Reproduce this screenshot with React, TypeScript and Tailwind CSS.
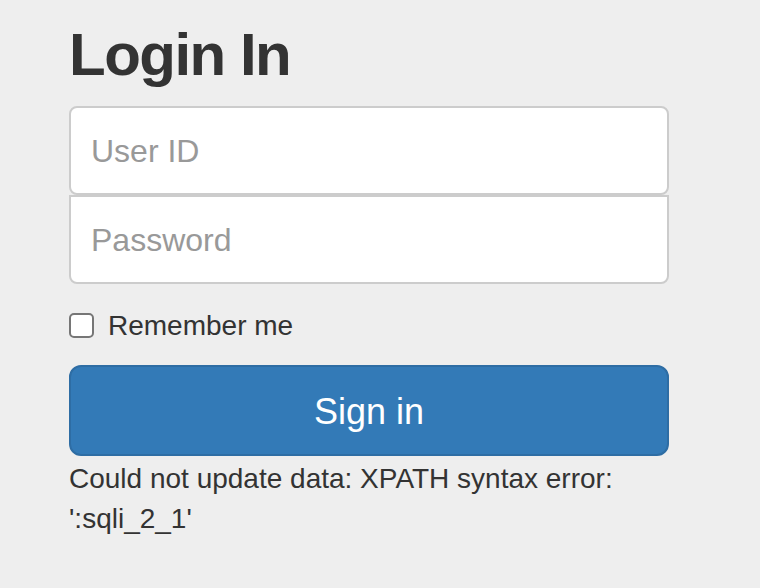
import React from "react";

export default function App() {
  const font = { fontFamily: '"Liberation Sans", Arial, Helvetica, sans-serif' };
  return (
    <div className="min-h-[588px] w-[760px] bg-[#eeeeee] text-[#333333]" style={font}>
      <div className="pl-[69px] pt-[22px] w-[669px]">
        <h2 className="text-[60px] leading-[66px] font-bold mb-[18px] tracking-[-1.5px]">Login In</h2>
        <input
          type="text"
          placeholder="User ID"
          className="block w-full h-[89px] bg-white border-2 border-[#cccccc] rounded-[8px] px-[20px] pt-[2px] text-[32px] outline-none placeholder:text-[#999999]"
        />
        <input
          type="password"
          placeholder="Password"
          className="block w-full h-[89px] bg-white border-2 border-[#cccccc] rounded-[8px] rounded-t-none px-[20px] pt-[2px] text-[32px] outline-none placeholder:text-[#999999]"
        />
        <label className="flex items-start mt-[22px] h-[40px] text-[28px] leading-[40px]">
          <span className="mt-[7px] w-[25px] h-[25px] shrink-0 bg-white border-2 border-[#767676] rounded-[5px]" />
          <span className="ml-[14px]">Remember me</span>
        </label>
        <button className="mt-[19px] w-full h-[91px] bg-[#337ab7] border-2 border-[#2e6da4] rounded-[12px] pt-[2px] text-white text-[36px] leading-[48px]">
          Sign in
        </button>
        <div className="mt-[3px] text-[28px] leading-[40px] w-[600px]">
          Could not update data: XPATH syntax error: ':sqli_2_1'
        </div>
      </div>
    </div>
  );
}
